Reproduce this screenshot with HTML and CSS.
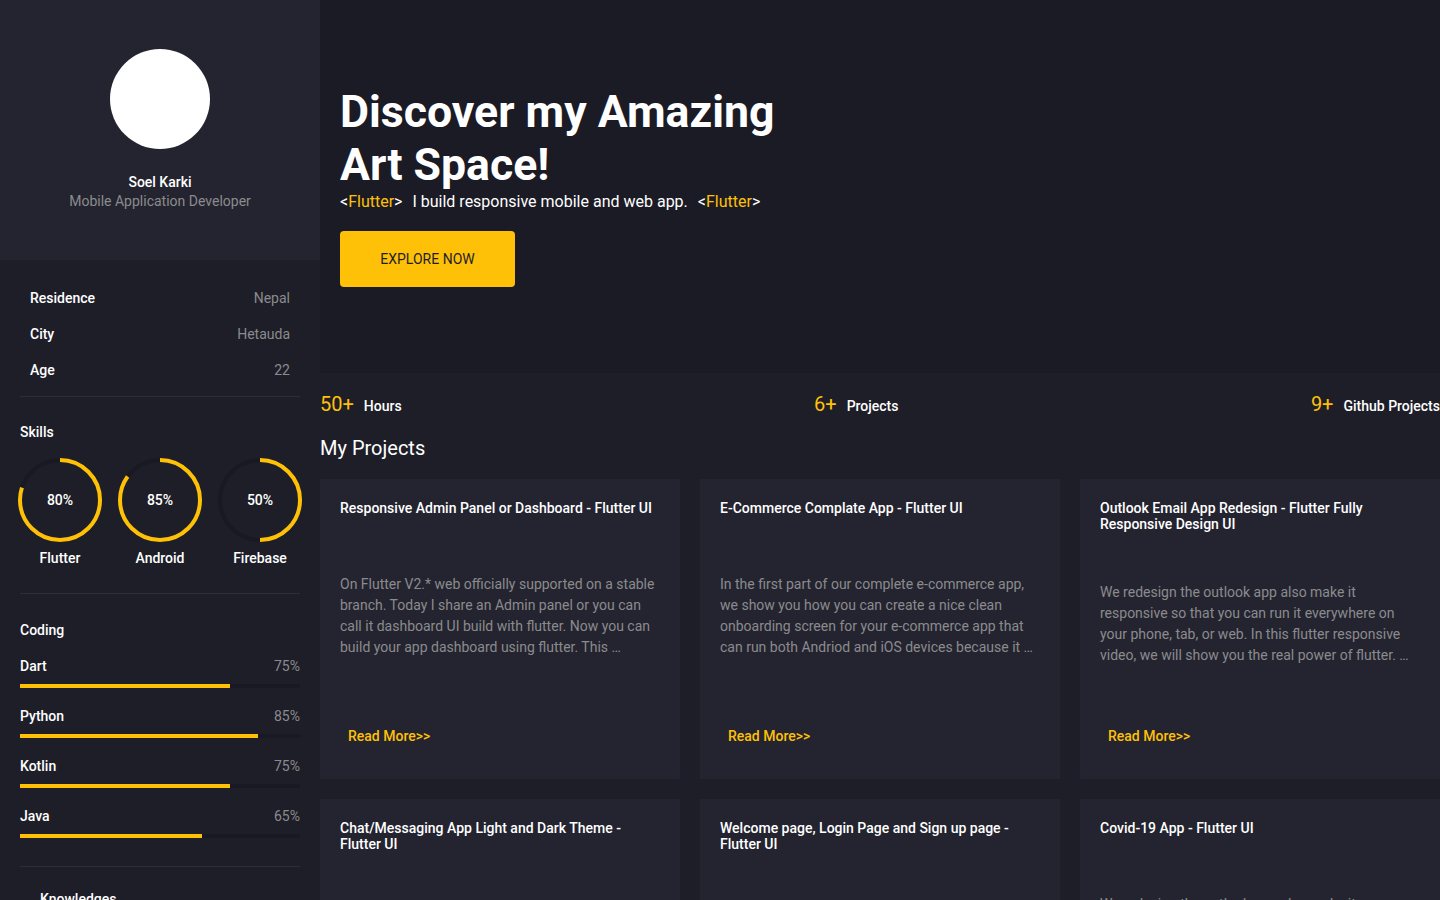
FILE: index.html
```html
<!DOCTYPE html>
<html lang="en">
<head>
<meta charset="utf-8">
<title>Soel Karki — Portfolio</title>
<link rel="stylesheet" href="styles.css">
</head>
<body>
<div class="app">
  <aside class="sidebar">
    <div class="profile">
      <div class="avatar"></div>
      <div class="name">Soel Karki</div>
      <div class="role">Mobile Application Developer</div>
    </div>
    <div class="side-body">
      <div class="info">
        <div class="info-row"><span class="info-label">Residence</span><span class="info-value">Nepal</span></div>
        <div class="info-row"><span class="info-label">City</span><span class="info-value">Hetauda</span></div>
        <div class="info-row"><span class="info-label">Age</span><span class="info-value">22</span></div>
      </div>
      <div class="divider"></div>

      <div class="section-title skills-title">Skills</div>
      <div class="skills">
        <div class="skill">
          <div class="ring">
            <svg viewBox="0 0 84 84" width="84" height="84"><circle class="ring-bg" cx="42" cy="42" r="40"/><circle class="ring-fg" cx="42" cy="42" r="40" pathLength="100" stroke-dasharray="80 100" transform="rotate(-90 42 42)"/></svg>
            <span class="ring-value">80%</span>
          </div>
          <div class="skill-name">Flutter</div>
        </div>
        <div class="skill">
          <div class="ring">
            <svg viewBox="0 0 84 84" width="84" height="84"><circle class="ring-bg" cx="42" cy="42" r="40"/><circle class="ring-fg" cx="42" cy="42" r="40" pathLength="100" stroke-dasharray="85 100" transform="rotate(-90 42 42)"/></svg>
            <span class="ring-value">85%</span>
          </div>
          <div class="skill-name">Android</div>
        </div>
        <div class="skill">
          <div class="ring">
            <svg viewBox="0 0 84 84" width="84" height="84"><circle class="ring-bg" cx="42" cy="42" r="40"/><circle class="ring-fg" cx="42" cy="42" r="40" pathLength="100" stroke-dasharray="50 100" transform="rotate(-90 42 42)"/></svg>
            <span class="ring-value">50%</span>
          </div>
          <div class="skill-name">Firebase</div>
        </div>
      </div>
      <div class="divider divider-skills"></div>

      <div class="section-title coding-title">Coding</div>
      <div class="coding">
        <div class="code-row">
          <div class="code-head"><span class="code-name">Dart</span><span class="code-pct">75%</span></div>
          <div class="bar"><div class="bar-fill" style="width:75%"></div></div>
        </div>
        <div class="code-row">
          <div class="code-head"><span class="code-name">Python</span><span class="code-pct">85%</span></div>
          <div class="bar"><div class="bar-fill" style="width:85%"></div></div>
        </div>
        <div class="code-row">
          <div class="code-head"><span class="code-name">Kotlin</span><span class="code-pct">75%</span></div>
          <div class="bar"><div class="bar-fill" style="width:75%"></div></div>
        </div>
        <div class="code-row">
          <div class="code-head"><span class="code-name">Java</span><span class="code-pct">65%</span></div>
          <div class="bar"><div class="bar-fill" style="width:65%"></div></div>
        </div>
      </div>
      <div class="divider divider-coding"></div>

      <div class="section-title knowledge-title">Knowledges</div>
      <ul class="knowledge">
        <li>Flutter, Dart</li>
        <li>Firebase</li>
        <li>Git Knowledge</li>
      </ul>
    </div>
  </aside>

  <main class="main">
    <section class="hero">
      <h1 class="hero-title">Discover my Amazing<br>Art Space!</h1>
      <div class="tagline">
        <span class="code-tag">&lt;<span class="accent">Flutter</span>&gt;</span>
        <span>I build responsive mobile and web app.</span>
        <span class="code-tag">&lt;<span class="accent">Flutter</span>&gt;</span>
      </div>
      <button class="explore">EXPLORE NOW</button>
    </section>

    <section class="stats">
      <div class="stat"><span class="stat-num">50+</span><span class="stat-label">Hours</span></div>
      <div class="stat"><span class="stat-num">6+</span><span class="stat-label">Projects</span></div>
      <div class="stat"><span class="stat-num">9+</span><span class="stat-label">Github Projects</span></div>
    </section>

    <h2 class="projects-title">My Projects</h2>
    <section class="projects">
      <article class="card">
        <h3 class="card-title">Responsive Admin Panel or Dashboard - Flutter UI</h3>
        <div class="spacer"></div>
        <p class="card-text">On Flutter V2.* web officially supported on a stable branch. Today I share an Admin panel or you can call it dashboard UI build with flutter. Now you can build your app dashboard using flutter. This …</p>
        <div class="spacer"></div>
        <a class="read-more" href="#">Read More&gt;&gt;</a>
      </article>
      <article class="card">
        <h3 class="card-title">E-Commerce Complate App - Flutter UI</h3>
        <div class="spacer"></div>
        <p class="card-text">In the first part of our complete e-commerce app, we show you how you can create a nice clean onboarding screen for your e-commerce app that can run both Andriod and iOS devices because it …</p>
        <div class="spacer"></div>
        <a class="read-more" href="#">Read More&gt;&gt;</a>
      </article>
      <article class="card">
        <h3 class="card-title">Outlook Email App Redesign - Flutter Fully Responsive Design UI</h3>
        <div class="spacer"></div>
        <p class="card-text">We redesign the outlook app also make it responsive so that you can run it everywhere on your phone, tab, or web. In this flutter responsive video, we will show you the real power of flutter. …</p>
        <div class="spacer"></div>
        <a class="read-more" href="#">Read More&gt;&gt;</a>
      </article>
      <article class="card">
        <h3 class="card-title">Chat/Messaging App Light and Dark Theme - Flutter UI</h3>
        <div class="spacer"></div>
        <p class="card-text">Today we are going to design a chat/messaging app UI with light and dark theme using flutter. It works great on both Android and iOS devices. …</p>
        <div class="spacer"></div>
        <a class="read-more" href="#">Read More&gt;&gt;</a>
      </article>
      <article class="card">
        <h3 class="card-title">Welcome page, Login Page and Sign up page - Flutter UI</h3>
        <div class="spacer"></div>
        <p class="card-text">In this video we are going to build a welcome page, login page and sign up page with flutter. It runs on both Android and iOS devices. …</p>
        <div class="spacer"></div>
        <a class="read-more" href="#">Read More&gt;&gt;</a>
      </article>
      <article class="card">
        <h3 class="card-title">Covid-19 App - Flutter UI</h3>
        <div class="spacer"></div>
        <p class="card-text">We redesign the outlook app also make it responsive so that you can run it everywhere on your phone, tab, or web. In this flutter responsive video, we will show you the real power of flutter. …</p>
        <div class="spacer"></div>
        <a class="read-more" href="#">Read More&gt;&gt;</a>
      </article>
    </section>
  </main>
</div>
</body>
</html>
```

FILE: styles.css
```css
* { box-sizing: border-box; margin: 0; padding: 0; }

html, body { height: 100%; }

body {
  background: #1E1E28;
  color: #FFFFFF;
  font-family: Roboto, "Liberation Sans", sans-serif;
  font-size: 14px;
  overflow: hidden;
}

.app {
  display: flex;
  height: 100vh;
}

/* ---------- Sidebar ---------- */
.sidebar {
  width: 320px;
  flex: none;
  background: #1E1E28;
  overflow: hidden;
}

.profile {
  height: 260px;
  background: #242430;
  display: flex;
  flex-direction: column;
  align-items: center;
  padding-top: 49px;
}

.avatar {
  width: 100px;
  height: 100px;
  border-radius: 50%;
  background: #FFFFFF;
  margin-bottom: 25px;
}

.name {
  font-size: 14px;
  font-weight: 500;
  line-height: 17px;
}

.role {
  margin-top: 0;
  font-size: 14px;
  font-weight: 400;
  line-height: 21px;
  color: #8B8B8D;
}

.side-body {
  padding: 0 20px;
}

.info {
  padding: 20px 10px 0;
}

.info-row {
  height: 36px;
  display: flex;
  align-items: center;
  justify-content: space-between;
  line-height: 16px;
}

.info-label { font-weight: 500; }
.info-value { color: #8B8B8D; }

.divider {
  height: 1px;
  background: #2E2E38;
  margin-top: 8px;
}
.divider-skills { margin-top: 27px; }
.divider-coding { margin-top: 28px; }

.section-title {
  font-size: 14px;
  font-weight: 500;
  line-height: 16px;
}
.skills-title { margin-top: 27px; }
.coding-title { margin-top: 28px; }
.knowledge-title { margin-top: 24px; padding-left: 20px; }

.skills {
  display: grid;
  grid-template-columns: repeat(3, 1fr);
  margin: 18px -10px 0;
}

.skill {
  display: flex;
  flex-direction: column;
  align-items: center;
}

.ring {
  position: relative;
  width: 84px;
  height: 84px;
}

.ring svg { display: block; }

.ring-bg {
  fill: none;
  stroke: #191923;
  stroke-width: 4;
}

.ring-fg {
  fill: none;
  stroke: #FFC107;
  stroke-width: 4;
}

.ring-value {
  position: absolute;
  inset: 0;
  display: flex;
  align-items: center;
  justify-content: center;
  font-weight: 500;
  line-height: 16px;
}

.skill-name {
  margin-top: 8px;
  font-weight: 500;
  line-height: 16px;
}

.coding { margin-top: 4px; }

.code-row { padding-top: 16px; }
.code-row + .code-row { padding-top: 20px; }

.code-head {
  display: flex;
  justify-content: space-between;
  line-height: 16px;
}

.code-name { font-weight: 500; }
.code-pct { color: #8B8B8D; }

.bar {
  margin-top: 10px;
  height: 4px;
  background: #191923;
}

.bar-fill {
  height: 100%;
  background: #FFC107;
}

.knowledge {
  list-style: none;
  padding: 10px 20px;
  color: #8B8B8D;
  line-height: 28px;
}

/* ---------- Main ---------- */
.main {
  flex: 1;
  min-width: 0;
  overflow: hidden;
}

.hero {
  height: 373px;
  background: #1B1B25;
  padding: 0 20px;
  display: flex;
  flex-direction: column;
  justify-content: center;
  align-items: flex-start;
}

.hero-title {
  font-size: 44.6px;
  font-weight: 700;
  line-height: 52.6px;
  color: #FFFFFF;
}

.tagline {
  display: flex;
  gap: 10px;
  font-size: 16px;
  line-height: 19px;
  padding-top: 1px;
}

.accent { color: #FFC107; }

.explore {
  margin-top: 20px;
  width: 175px;
  height: 56px;
  border: none;
  border-radius: 4px;
  background: #FFC107;
  color: #1E1E28;
  font-family: inherit;
  font-size: 14px;
  font-weight: 400;
  letter-spacing: 0;
  text-align: center;
}

.stats {
  display: flex;
  justify-content: space-between;
  align-items: center;
  padding: 20px 0 19px;
}

.stat {
  display: flex;
  align-items: baseline;
  gap: 10px;
  line-height: 23px;
}

.stat-num {
  font-size: 20px;
  color: #FFC107;
}

.stat-label {
  font-size: 14px;
  font-weight: 500;
}

.projects-title {
  font-size: 20px;
  font-weight: 400;
  line-height: 23px;
  margin-bottom: 19px;
}

.projects {
  display: grid;
  grid-template-columns: repeat(3, 1fr);
  gap: 20px;
}

.card {
  height: 300px;
  background: #242430;
  padding: 21px 20px 19px;
  display: flex;
  flex-direction: column;
}

.card-title {
  font-size: 14px;
  font-weight: 500;
  line-height: 16px;
}

.spacer { flex: 1; }

.card-text {
  margin-top: 4px;
  font-size: 14px;
  line-height: 21px;
  color: #8B8B8D;
  display: -webkit-box;
  -webkit-line-clamp: 4;
  -webkit-box-orient: vertical;
  overflow: hidden;
}

.read-more {
  align-self: flex-start;
  height: 48px;
  padding: 0 8px;
  display: flex;
  align-items: center;
  color: #FFC107;
  font-size: 14px;
  font-weight: 500;
  text-decoration: none;
}
```
